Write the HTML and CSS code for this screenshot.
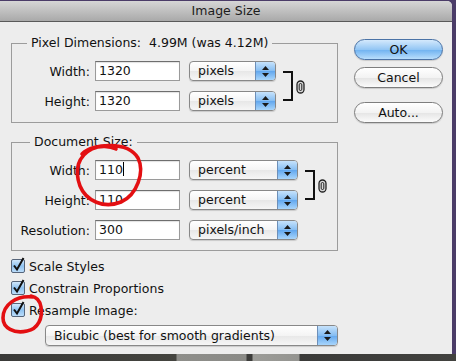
FILE: index.html
```html
<!DOCTYPE html>
<html lang="en">
<head>
    <meta charset="UTF-8">
    <title>Image Size</title>
    <link rel="stylesheet" href="styles.css">
</head>
<body>
    <div class="window">
        <div class="titlebar">Image Size</div>
        <div class="content">
            <div class="main">
                <fieldset class="group group-pixels">
                    <legend>Pixel Dimensions:&nbsp; 4.99M (was 4.12M)</legend>
                    <div class="rows">
                        <label>Width:</label>
                        <div class="input">1320</div>
                        <div class="select">pixels<span class="arrows"><svg width="7" height="11" viewBox="0 0 7 11"><path d="M3.5 0 L7 4 H0 Z M0 7 H7 L3.5 11 Z" fill="#1a1a1a"/></svg></span></div>
                        <div class="link">
                            <span class="bracket"></span>
                            <svg class="chain" width="9" height="14" viewBox="0 0 9 14"><rect x="1" y="1" width="7" height="12" rx="3.5" fill="#d8d8d8" stroke="#222" stroke-width="1.3"/><rect x="3.2" y="3.5" width="2.6" height="7" rx="1.3" fill="none" stroke="#222" stroke-width="1"/></svg>
                        </div>
                        <label>Height:</label>
                        <div class="input">1320</div>
                        <div class="select">pixels<span class="arrows"><svg width="7" height="11" viewBox="0 0 7 11"><path d="M3.5 0 L7 4 H0 Z M0 7 H7 L3.5 11 Z" fill="#1a1a1a"/></svg></span></div>
                    </div>
                </fieldset>

                <fieldset class="group group-doc">
                    <legend>Document Size:</legend>
                    <div class="rows rows-doc">
                        <label>Width:</label>
                        <div class="input">110<span class="caret"></span></div>
                        <div class="select">percent<span class="arrows"><svg width="7" height="11" viewBox="0 0 7 11"><path d="M3.5 0 L7 4 H0 Z M0 7 H7 L3.5 11 Z" fill="#1a1a1a"/></svg></span></div>
                        <div class="link">
                            <span class="bracket"></span>
                            <svg class="chain" width="9" height="14" viewBox="0 0 9 14"><rect x="1" y="1" width="7" height="12" rx="3.5" fill="#d8d8d8" stroke="#222" stroke-width="1.3"/><rect x="3.2" y="3.5" width="2.6" height="7" rx="1.3" fill="none" stroke="#222" stroke-width="1"/></svg>
                        </div>
                        <label>Height:</label>
                        <div class="input">110</div>
                        <div class="select">percent<span class="arrows"><svg width="7" height="11" viewBox="0 0 7 11"><path d="M3.5 0 L7 4 H0 Z M0 7 H7 L3.5 11 Z" fill="#1a1a1a"/></svg></span></div>
                        <label>Resolution:</label>
                        <div class="input">300</div>
                        <div class="select">pixels/inch<span class="arrows"><svg width="7" height="11" viewBox="0 0 7 11"><path d="M3.5 0 L7 4 H0 Z M0 7 H7 L3.5 11 Z" fill="#1a1a1a"/></svg></span></div>
                    </div>
                </fieldset>

                <div class="checks">
                    <div class="check"><svg class="box" width="15" height="16" viewBox="0 0 15 16"><defs><linearGradient id="cb" x1="0" y1="0" x2="0" y2="1"><stop offset="0" stop-color="#d6ebfd"/><stop offset="0.5" stop-color="#8fc2f0"/><stop offset="1" stop-color="#bfe0fc"/></linearGradient></defs><rect x="0.5" y="2.5" width="13" height="13" rx="1.5" fill="url(#cb)" stroke="#56657a"/><path d="M3 8.5 L6 12.5 L12.5 1" fill="none" stroke="#111" stroke-width="2"/></svg>Scale Styles</div>
                    <div class="check"><svg class="box" width="15" height="16" viewBox="0 0 15 16"><rect x="0.5" y="2.5" width="13" height="13" rx="1.5" fill="url(#cb)" stroke="#56657a"/><path d="M3 8.5 L6 12.5 L12.5 1" fill="none" stroke="#111" stroke-width="2"/></svg>Constrain Proportions</div>
                    <div class="check"><svg class="box" width="15" height="16" viewBox="0 0 15 16"><rect x="0.5" y="2.5" width="13" height="13" rx="1.5" fill="url(#cb)" stroke="#56657a"/><path d="M3 8.5 L6 12.5 L12.5 1" fill="none" stroke="#111" stroke-width="2"/></svg>Resample Image:</div>
                </div>
                <div class="select select-wide">Bicubic (best for smooth gradients)<span class="arrows"><svg width="7" height="11" viewBox="0 0 7 11"><path d="M3.5 0 L7 4 H0 Z M0 7 H7 L3.5 11 Z" fill="#1a1a1a"/></svg></span></div>
            </div>

            <div class="buttons">
                <div class="button default">OK</div>
                <div class="button">Cancel</div>
                <div class="button auto">Auto...</div>
            </div>
        </div>
    </div>
    <div class="desk"></div>

    <svg class="scribbles" width="456" height="361" viewBox="0 0 456 361">
        <path d="M82 154 C93 143 128 141 138 158 C145 172 137 195 121 202 C104 209 86 201 80 186 C74 170 78 156 92 149 C100 145 110 146 116 149" fill="none" stroke="#e30f12" stroke-width="3.6" stroke-linecap="round"/>
        <path d="M33 297 C16 295 3 305 3 318 C3 328 14 334 27 331 C38 329 43 318 41 307 C40 301 37 297 31 296" fill="none" stroke="#e30f12" stroke-width="3.6" stroke-linecap="round"/>
    </svg>
</body>
</html>
```

FILE: styles.css
```css
* {
    margin: 0;
    padding: 0;
    box-sizing: border-box;
}
body {
    width: 456px;
    height: 361px;
    overflow: hidden;
    position: relative;
    background: #4b3c68;
    font-family: "DejaVu Sans", sans-serif;
    font-size: 12.5px;
    color: #111;
}
.window {
    margin-top: 1px;
    width: 452px;
    height: 353px;
    background: #ededed;
    border-radius: 0 5px 0 0;
    overflow: hidden;
}
.titlebar {
    height: 21px;
    line-height: 20px;
    text-align: center;
    color: #1c1c1c;
    background: linear-gradient(#d6d6d6, #a9a9a9);
    border-bottom: 1px solid #5a5a5a;
}
.content {
    display: flex;
    padding: 13px 0 0 11px;
}
.main {
    width: 327px;
}
.group {
    width: 327px;
    min-width: 0;
    border: 1px solid #9c9c9c;
    padding: 0 0 11px 0;
}
.group legend {
    line-height: 16px;
    padding: 0 4px;
    margin-left: 15px;
}
.group-pixels .rows {
    padding-top: 10px;
}
.group-doc {
    margin-top: 11px;
    padding-bottom: 10px;
}
.group-doc legend {
    margin-left: 18px;
}
.group-doc .rows {
    padding-top: 10px;
}
.rows {
    display: grid;
    grid-template-columns: 83px 94px 87px auto;
    grid-auto-rows: 20px;
    row-gap: 10px;
    align-items: center;
}
.rows-doc {
    grid-template-columns: 83px 94px 109px auto;
}
.rows label {
    text-align: right;
    padding-right: 5px;
}
.input {
    width: 85px;
    height: 20px;
    line-height: 18px;
    padding-left: 3px;
    background: #fff;
    border: 1px solid #9a9a9a;
    border-top-color: #6e6e6e;
    box-shadow: inset 0 1px 1px rgba(0, 0, 0, 0.12);
}
.caret {
    display: inline-block;
    width: 1px;
    height: 14px;
    background: #000;
    vertical-align: -2px;
}
.select {
    position: relative;
    height: 20px;
    line-height: 18px;
    padding-left: 8px;
    border: 1px solid #888;
    border-radius: 4px;
    background: linear-gradient(#ffffff, #f4f4f4 50%, #e7e7e7 51%, #f6f6f6);
    box-shadow: 0 1px 1px rgba(0, 0, 0, 0.15);
    overflow: hidden;
}
.select .arrows {
    position: absolute;
    top: 0;
    right: 0;
    bottom: 0;
    width: 20px;
    display: flex;
    align-items: center;
    justify-content: center;
    border-left: 1px solid #6d8fb8;
    background: linear-gradient(#c6e2fb, #85bdf2 50%, #62a7ee 51%, #a8d5fb);
}
.link {
    grid-column: 4;
    grid-row: 1 / 3;
    display: flex;
    align-items: center;
    margin-left: 7px;
}
.bracket {
    width: 10px;
    height: 30px;
    border: 2px solid #111;
    border-left: none;
}
.chain {
    margin-left: 3px;
    margin-top: 2px;
}
.checks {
    margin-top: 4px;
}
.check {
    display: flex;
    align-items: center;
    height: 22px;
}
.check .box {
    margin-right: 3px;
    margin-top: -2px;
}
.select-wide {
    margin: 4px 0 0 34px;
    width: 293px;
    height: 21px;
    line-height: 19px;
}
.buttons {
    margin-left: 16px;
    padding-top: 4px;
    display: flex;
    flex-direction: column;
    width: 89px;
}
.button {
    height: 21px;
    line-height: 19px;
    text-align: center;
    border: 1px solid #7e7e7e;
    border-radius: 11px;
    background: linear-gradient(#ffffff, #f3f3f3 50%, #e4e4e4 51%, #fbfbfb);
    box-shadow: 0 1px 1px rgba(0, 0, 0, 0.15);
    margin-top: 7px;
}
.button.default {
    margin-top: 0;
    border-color: #4b73a6;
    background: linear-gradient(#d4e9fc, #93c6f4 50%, #6eb1f0 51%, #b9defc);
}
.button.auto {
    margin-top: 14px;
}
.desk {
    height: 7px;
    background: linear-gradient(90deg, #3a3a38 0, #44443f 176px, #8e8e8a 177px, #8a8a86 246px, #3c3c3a 247px, #3c3c3a 252px, #9c9c98 253px, #949490 299px, #3a3a38 300px, #42423f 100%);
}
.scribbles {
    position: absolute;
    top: 0;
    left: 0;
    pointer-events: none;
}
```
